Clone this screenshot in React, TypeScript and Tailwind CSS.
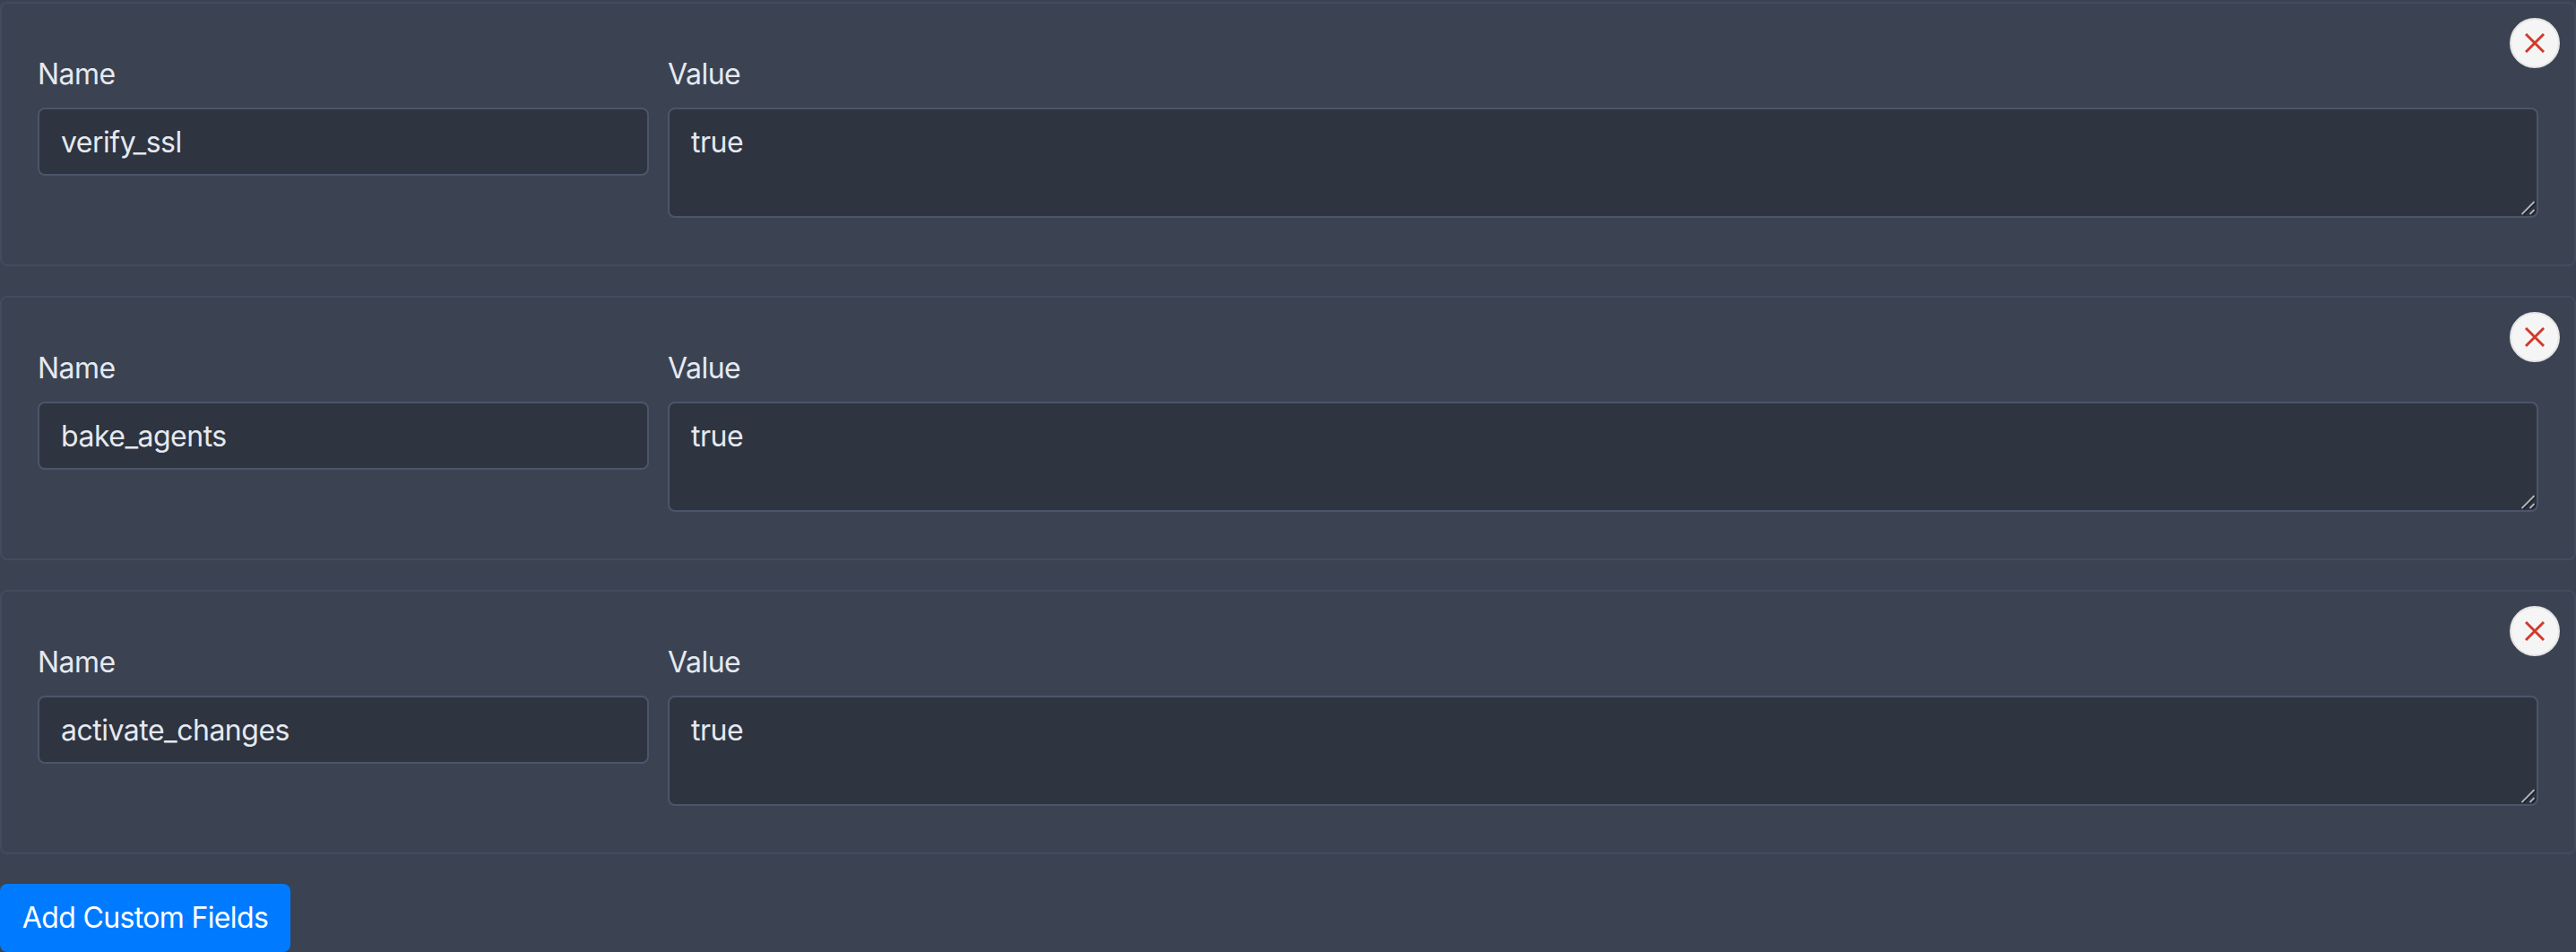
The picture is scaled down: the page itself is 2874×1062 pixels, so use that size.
const rows = ["verify_ssl", "bake_agents", "activate_changes"];

function CloseIcon() {
  return (
    <svg width="22" height="22" viewBox="0 0 22 22" fill="none" stroke="#d1392a" strokeWidth="2.9" strokeLinecap="butt">
      <path d="M1 1 L21 21 M21 1 L1 21" />
    </svg>
  );
}

function ResizeGrip() {
  return (
    <svg className="pointer-events-none absolute bottom-[3px] right-[3px]" width="16" height="16" viewBox="0 0 16 16" fill="none">
      <path d="M0.5 16 L15.5 1 M9.5 16 L15.5 10" stroke="#1d2129" strokeWidth="2" transform="translate(0.8 0.8)" />
      <path d="M0.5 15 L14.5 1 M9.5 15 L14.5 10" stroke="#b4b6ba" strokeWidth="1.8" />
    </svg>
  );
}

function Row({ name }: { name: string }) {
  return (
    <div className="relative h-[295px] rounded-[8px] border-2 border-[#434c5e] px-[40px] pt-[55px]">
      <button className="absolute right-[16px] top-[16px] flex h-[56px] w-[56px] items-center justify-center rounded-full border-2 border-[#e4e4e4] bg-[#f5f5f5]">
        <CloseIcon />
      </button>
      <div className="grid grid-cols-[682px_1fr] gap-x-[21px]">
        <div>
          <label className="mb-[13px] block text-[32px] leading-[48px] tracking-[-0.5px] text-[#e5e9f0]">Name</label>
          <input
            defaultValue={name}
            className="block h-[76px] w-full rounded-[8px] border-2 border-[#4c566a] bg-[#2e3440] px-[24px] text-[32px] tracking-[-0.5px] text-[#e5e9f0] outline-none"
          />
        </div>
        <div>
          <label className="mb-[13px] block text-[32px] leading-[48px] tracking-[-0.5px] text-[#e5e9f0]">Value</label>
          <div className="relative">
            <textarea
              defaultValue="true"
              className="block h-[123px] w-full resize-none rounded-[8px] border-2 border-[#4c566a] bg-[#2e3440] px-[24px] py-[13px] text-[32px] leading-[48px] tracking-[-0.5px] text-[#e5e9f0] outline-none"
            />
            <ResizeGrip />
          </div>
        </div>
      </div>
    </div>
  );
}

export default function App() {
  return (
    <div className="flex min-h-screen flex-col gap-[33px] bg-[#3b4252] pt-[2px] font-['Inter',sans-serif]">
      {rows.map((r) => (
        <Row key={r} name={r} />
      ))}
      <button className="h-[76px] w-[324px] rounded-[8px] bg-[#007bff] text-[32px] tracking-[-0.65px] text-white">Add Custom Fields</button>
    </div>
  );
}
